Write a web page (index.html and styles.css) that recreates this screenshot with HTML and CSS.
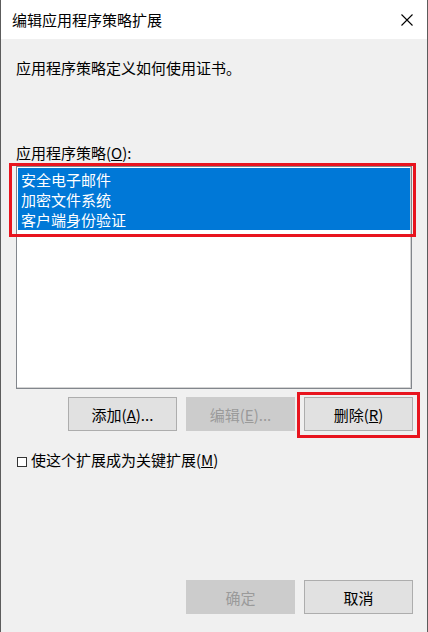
FILE: index.html
```html
<!DOCTYPE html>
<html lang="zh-CN">
<head>
    <meta charset="UTF-8">
    <title>编辑应用程序策略扩展</title>
    <link rel="stylesheet" href="styles.css">
</head>
<body>
    <div class="window">
        <div class="titlebar">
            <span class="title">编辑应用程序策略扩展</span>
            <svg class="close-icon" width="12" height="12" viewBox="0 0 12 12">
                <path d="M0.5 0.5 L11.5 11.5 M11.5 0.5 L0.5 11.5" stroke="#000" stroke-width="1.1" fill="none"/>
            </svg>
        </div>

        <div class="content">
            <p class="desc">应用程序策略定义如何使用证书。</p>

            <p class="label">应用程序策略(<u>O</u>):</p>
            <div class="list-wrap">
                <ul class="policy-list">
                    <li class="selected">安全电子邮件</li>
                    <li class="selected">加密文件系统</li>
                    <li class="selected">客户端身份验证</li>
                </ul>
                <!-- highlight frame -->
                <div class="mark mark-list"></div>
            </div>

            <div class="button-row">
                <button class="btn">添加(<u>A</u>)...</button>
                <button class="btn disabled">编辑(<u>E</u>)...</button>
                <div class="btn-wrap">
                    <button class="btn">删除(<u>R</u>)</button>
                    <div class="mark mark-btn"></div>
                </div>
            </div>

            <label class="check">
                <span class="box"></span>使这个扩展成为关键扩展(<u>M</u>)
            </label>
        </div>

        <div class="footer">
            <button class="btn disabled">确定</button>
            <button class="btn">取消</button>
        </div>
    </div>
</body>
</html>
```

FILE: styles.css
```css
* {
    box-sizing: border-box;
}

body {
    margin: 0;
    font-family: "Noto Sans CJK SC", "Noto Sans", sans-serif;
    font-size: 15px;
    color: #000;
}

.window {
    width: 428px;
    height: 632px;
    display: flex;
    flex-direction: column;
    background: #f0f0f0;
    border-left: 1px solid #5c5c5c;
    border-right: 1px solid #5c5c5c;
}

.titlebar {
    height: 39px;
    flex: none;
    display: flex;
    align-items: center;
    justify-content: space-between;
    background: #fff;
    padding: 0 14px 0 11px;
}

.title {
    font-size: 15px;
    line-height: 20px;
}

.content {
    padding: 0 14px 0 15px;
}

.desc,
.label {
    margin: 0;
    line-height: 20px;
}

.desc {
    margin-top: 19px;
}

.label {
    margin-top: 65px;
}

.list-wrap {
    position: relative;
    margin-top: 3px;
    width: 396px;
}

.policy-list {
    list-style: none;
    margin: 0;
    height: 223px;
    padding: 1px;
    background: #fff;
    border: 1px solid #82868c;
    box-shadow: inset -1px -1px 0 #d4d4d4;
}

.policy-list li {
    height: 20px;
    line-height: 20px;
    padding-left: 3px;
}

.policy-list li:first-child {
    height: 22px;
    padding-top: 2px;
}

.policy-list .selected {
    background: #0078d7;
    color: #fff;
}

.mark {
    position: absolute;
    border: 3px solid #e8141e;
    pointer-events: none;
}

.mark-list {
    left: -7px;
    top: -3px;
    width: 407px;
    height: 74px;
}

.button-row,
.footer {
    display: flex;
    justify-content: flex-end;
    gap: 9px;
}

.button-row {
    margin-top: 8px;
}

.btn-wrap {
    position: relative;
}

.mark-btn {
    left: -7px;
    top: -5px;
    width: 123px;
    height: 46px;
}

.btn {
    width: 109px;
    height: 34px;
    padding: 0;
    font-family: inherit;
    font-size: 15px;
    color: #000;
    background: #e1e1e1;
    border: 1px solid #adadad;
}

.btn.disabled {
    background: #cccccc;
    border-color: #cccccc;
    color: #9a9a9a;
}

.check {
    display: flex;
    align-items: center;
    margin-top: 19px;
    line-height: 20px;
}

.box {
    width: 10px;
    height: 10px;
    margin: 3px 4px 0 1px;
    border: 1px solid #333;
    background: #fff;
}

.footer {
    margin-top: auto;
    padding: 0 14px 18px 0;
}
```
